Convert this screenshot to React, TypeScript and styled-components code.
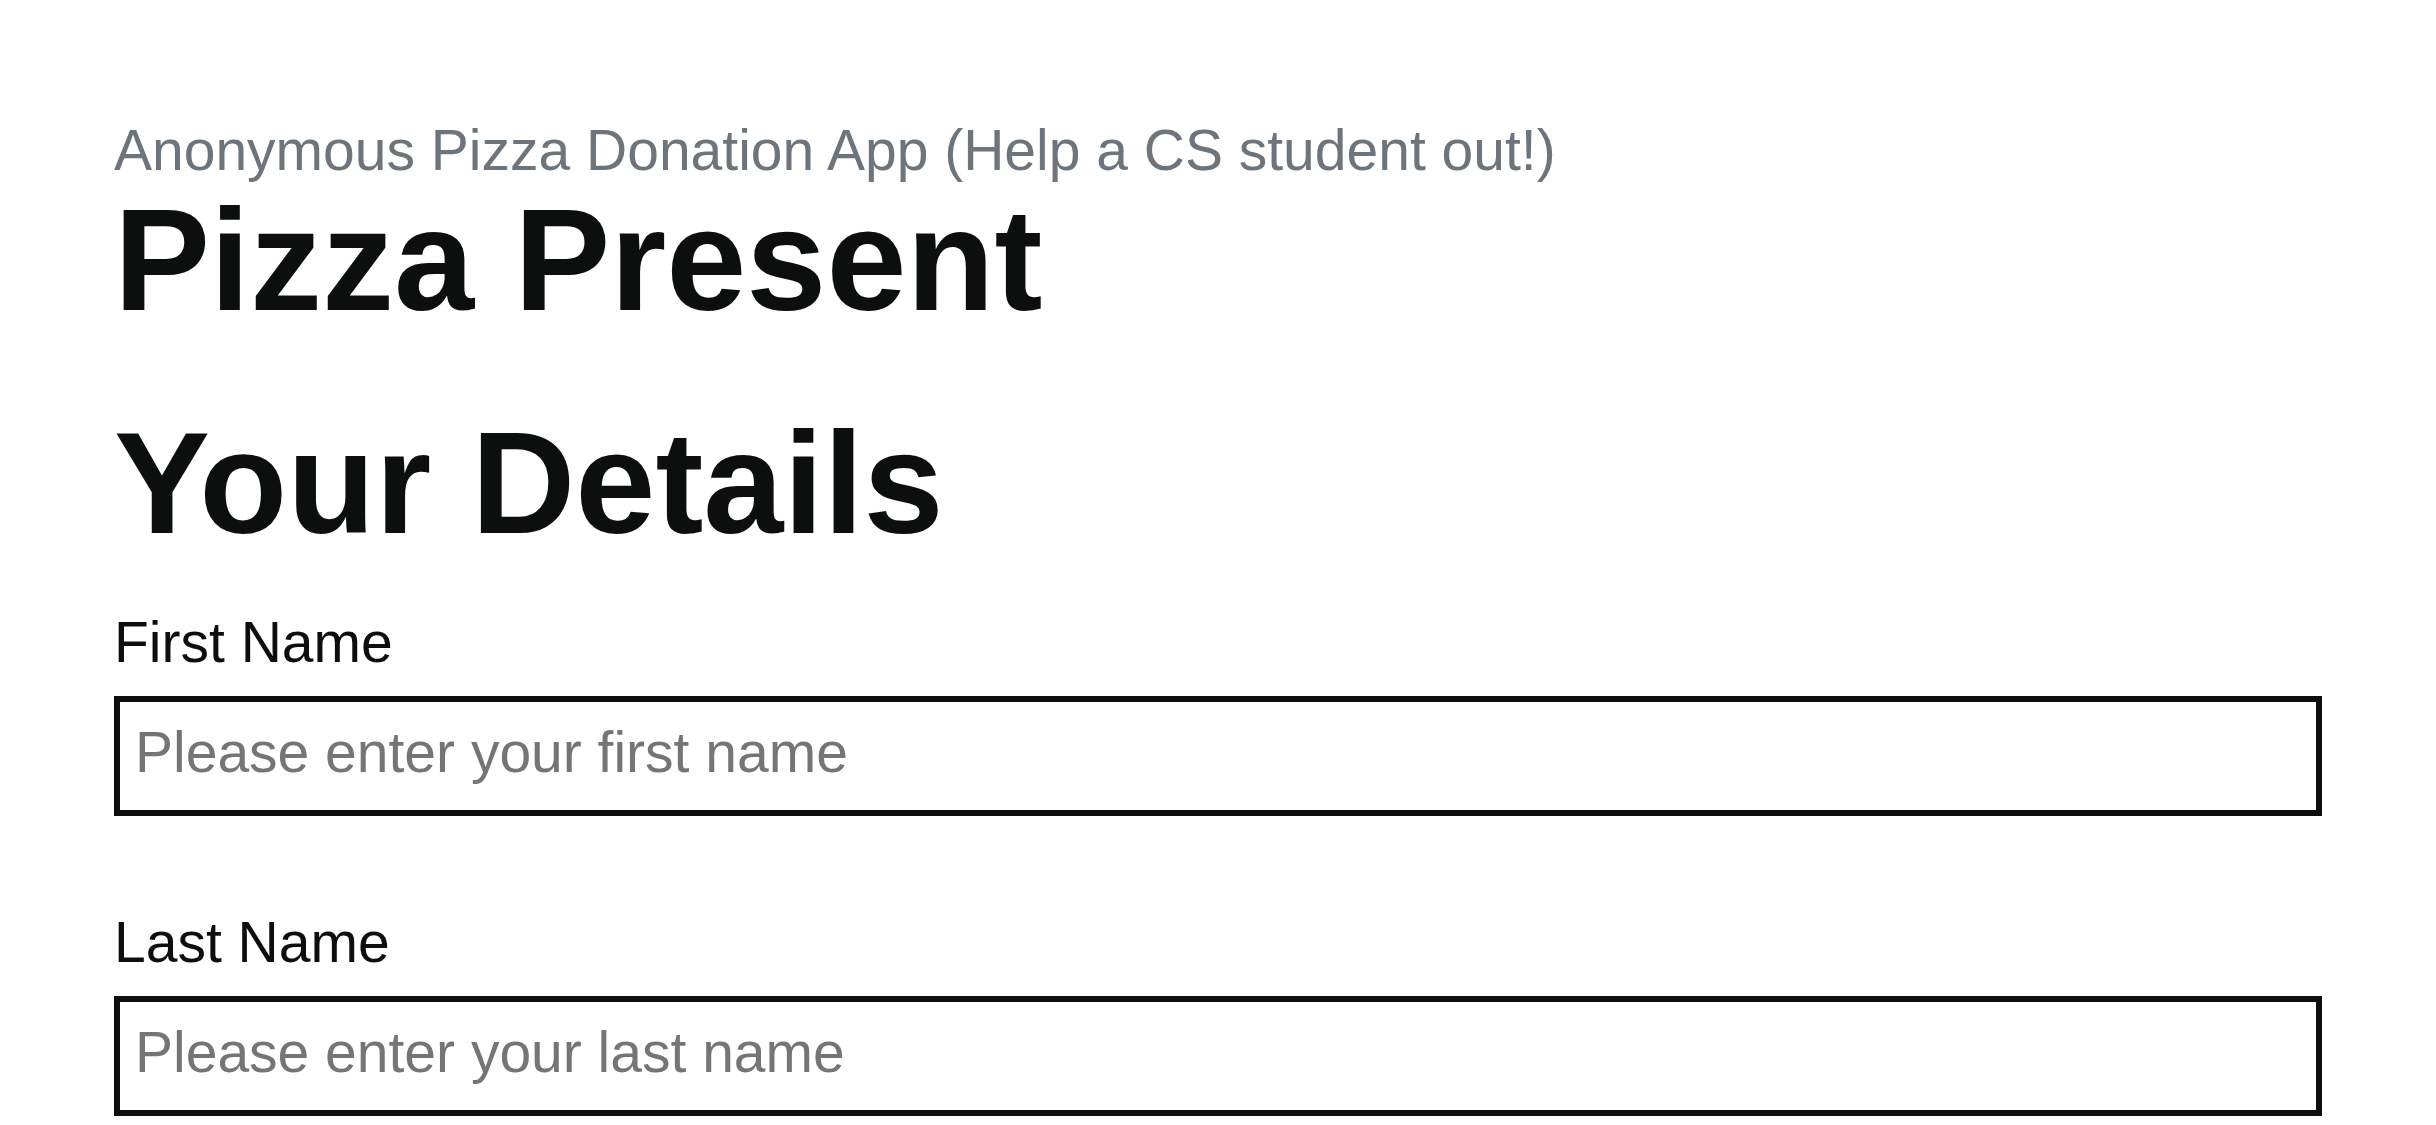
import styled, { createGlobalStyle } from 'styled-components'
import { FunctionComponent } from 'react'

const GlobalStyle = createGlobalStyle`
  body {
    margin: 0;
    background: #fff;
    font-family: "Liberation Sans", Arial, sans-serif;
  }
`

const Page = styled.main`
  display: flex;
  flex-direction: column;
  padding: 118px 114px 0;
`

const Subtitle = styled.div`
  font-size: 57px;
  line-height: 64px;
  color: #6c757d;
`

const Heading = styled.h1<{ $spaced?: boolean }>`
  margin: ${p => (p.$spaced ? '67px' : '1px')} 0 0;
  font-size: 144px;
  line-height: 156px;
  font-weight: bold;
  color: #0d0f0e;
`

const Field = styled.div`
  display: flex;
  flex-direction: column;
  gap: 22px;
  margin-top: 48px;

  & + & {
    margin-top: 94px;
  }
`

const Label = styled.label`
  font-size: 57px;
  line-height: 64px;
  color: #0d0f0e;
`

const Input = styled.input`
  box-sizing: border-box;
  width: 100%;
  height: 120px;
  margin: 0;
  padding: 0 15px 9px;
  border: 6px solid #0d0f0e;
  border-radius: 0;
  outline: none;
  background: #fff;
  font-family: "Liberation Sans", Arial, sans-serif;
  font-size: 57px;
  color: #0d0f0e;

  &::placeholder {
    color: #757575;
  }
`

interface FieldProps {
  id: string
  label: string
  placeholder: string
}

const TextField: FunctionComponent<FieldProps> = ({ id, label, placeholder }) =>
  <Field>
    <Label htmlFor={id}>{label}</Label>
    <Input id={id} type="text" placeholder={placeholder} />
  </Field>

const App = () =>
  <>
    <GlobalStyle />
    <Page>
      <Subtitle>Anonymous Pizza Donation App (Help a CS student out!)</Subtitle>
      <Heading>Pizza Present</Heading>
      <Heading as="h2" $spaced>Your Details</Heading>
      <TextField id="firstName" label="First Name" placeholder="Please enter your first name" />
      <TextField id="lastName" label="Last Name" placeholder="Please enter your last name" />
    </Page>
  </>

export default App
